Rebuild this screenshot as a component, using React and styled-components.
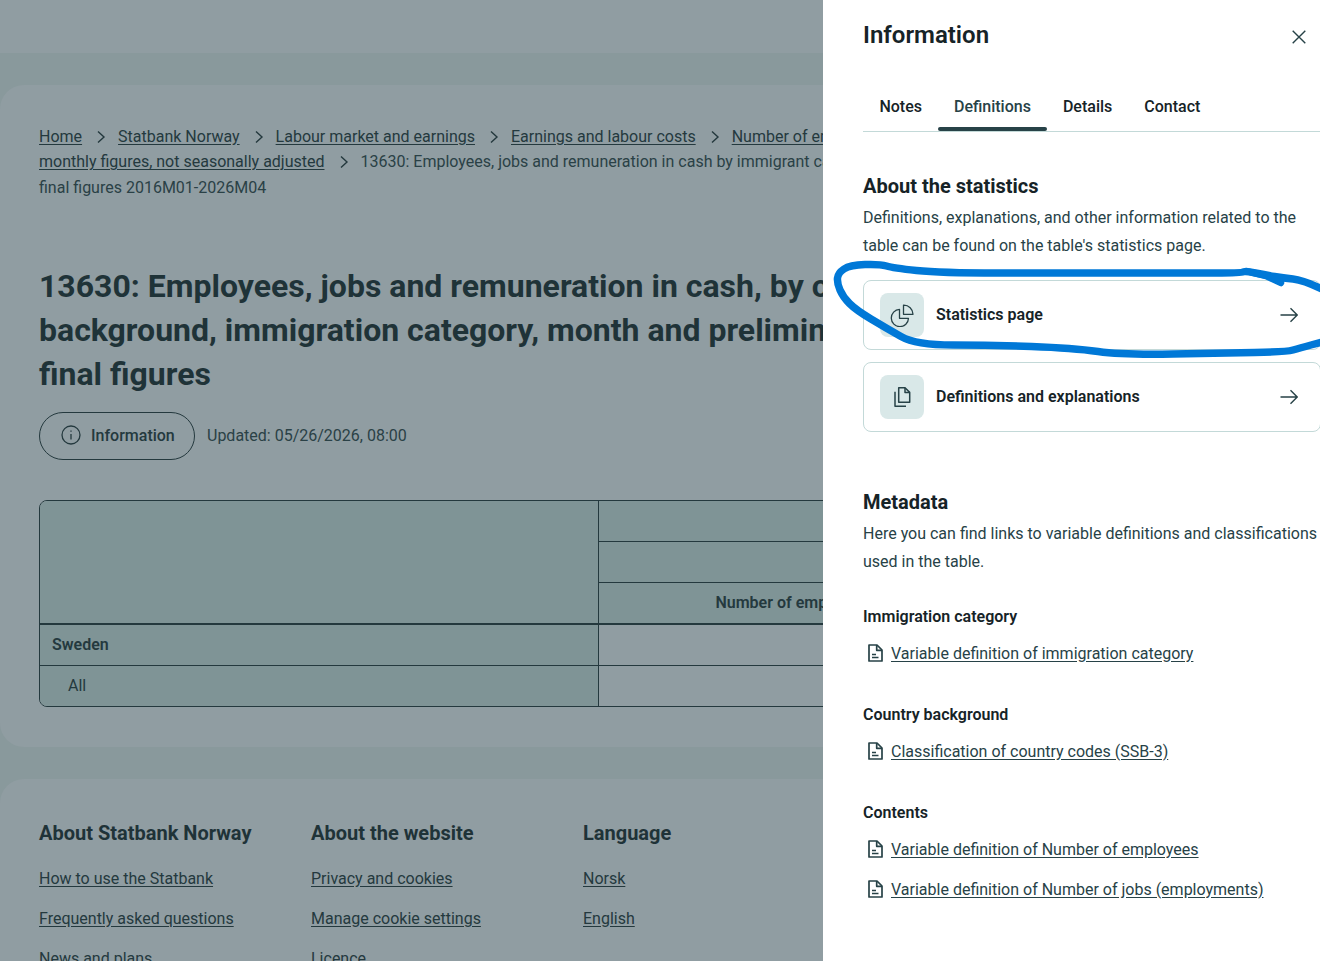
import React from 'react';
import styled, { createGlobalStyle } from 'styled-components';

const Global = createGlobalStyle`
  html, body { margin: 0; padding: 0; height: 100%; overflow: hidden; }
  body { font-family: Roboto, "Liberation Sans", sans-serif; font-size: 16px; color: #24393e; }
  * { box-sizing: border-box; }
`;

const Screen = styled.div`
  position: relative;
  width: 1320px;
  height: 961px;
  overflow: hidden;
  background: #89999c;
`;
const TopBar = styled.div`
  height: 53px;
  background: #909da2;
`;
const MainCard = styled.main`
  margin-top: 32px;
  height: 662px;
  padding: 39px 0 0 39px;
  background: #909da2;
  border-radius: 24px;
  overflow: hidden;
`;
const Crumbs = styled.nav`
  display: flex;
  flex-direction: column;
  height: 76px;
`;
const CrumbLine = styled.div`
  display: flex;
  align-items: center;
  height: 25.5px;
  white-space: nowrap;
  color: #2a4146;
`;
const CrumbLink = styled.a`
  color: #24393e;
  text-decoration: underline;
  text-underline-offset: 2px;
`;
const CrumbSep = styled.svg`
  width: 10px;
  height: 14px;
  margin: 0 12px 0 14px;
  fill: none;
  stroke: #24393e;
  stroke-width: 1.4;
`;
const Title = styled.h1`
  margin: 64px 0 0;
  font-size: 32px;
  line-height: 44px;
  font-weight: 700;
  color: #1f3338;
  white-space: nowrap;
`;
const MetaRow = styled.div`
  display: flex;
  align-items: center;
  margin-top: 16px;
  gap: 12px;
  color: #2a4146;
`;
const Updated = styled.span`
  padding-bottom: 2px;
`;
const InfoButton = styled.button`
  display: flex;
  align-items: center;
  gap: 10px;
  width: 156px;
  height: 48px;
  padding: 0 0 2px 21px;
  background: transparent;
  border: 1.5px solid #24393e;
  border-radius: 24px;
  font: 500 16px Roboto, sans-serif;
  color: #24393e;
`;
const Table = styled.table`
  margin-top: 40px;
  width: 1343px;
  table-layout: fixed;
  border-collapse: separate;
  border-spacing: 0;
  border: 1px solid #24393e;
  border-radius: 8px;
  overflow: hidden;
  font-size: 16px;
  color: #24393e;
`;
const Cell = styled.td`
  height: ${p => p.$h || 41}px;
  padding: 0 ${p => (p.$indent ? 28 : 12)}px 1px;
  background: ${p => (p.$stub ? '#7f9496' : 'transparent')};
  border-right: 1px solid #24393e;
  border-bottom: ${p => (p.$thick ? '2px' : p.$last ? '0' : '1px')} solid #24393e;
  font-weight: ${p => (p.$bold ? 600 : 400)};
  text-align: ${p => (p.$center ? 'center' : 'left')};
`;
const HeadCell = styled(Cell)`
  background: #7f9496;
`;
const Footer = styled.footer`
  display: flex;
  margin-top: 32px;
  height: 300px;
  padding: 40px 0 0 39px;
  background: #909da2;
  border-radius: 24px;
`;
const FooterCol = styled.div`
  display: flex;
  flex-direction: column;
  width: 272px;
`;
const FooterHead = styled.h2`
  margin: 0 0 18px;
  font-size: 20px;
  line-height: 28px;
  font-weight: 700;
  color: #1f3338;
`;
const FooterLink = styled.a`
  height: 40px;
  line-height: 28px;
  color: #24393e;
  text-decoration: underline;
  text-underline-offset: 2px;
`;

const Drawer = styled.aside`
  position: absolute;
  top: 0;
  right: 0;
  width: 497px;
  height: 961px;
  padding: 0 0 0 40px;
  background: #fff;
  color: #162327;
`;
const DrawerHead = styled.div`
  display: flex;
  justify-content: space-between;
  height: 81px;
  padding: 19px 14px 0 0;
`;
const DrawerTitle = styled.h2`
  margin: 0;
  font-size: 24px;
  line-height: 32px;
  font-weight: 600;
  color: #162327;
`;
const CloseBtn = styled.button`
  width: 14px;
  height: 14px;
  margin-top: 11px;
  padding: 0;
  border: 0;
  background: none;
  display: flex;
`;
const Tabs = styled.div`
  display: flex;
  height: 51px;
  border-bottom: 1px solid #c3d9d8;
`;
const Tab = styled.div`
  position: relative;
  padding: 1px 15.6px 0 16.4px;
  height: 50px;
  line-height: 50px;
  font-weight: 500;
  color: ${p => (p.$active ? '#274247' : '#162327')};
  &::after {
    content: '';
    display: ${p => (p.$active ? 'block' : 'none')};
    position: absolute;
    left: 0;
    right: 0;
    bottom: 0;
    height: 4px;
    border-radius: 2px;
    background: #274247;
  }
`;
const Section = styled.section`
  margin-top: ${p => p.$top}px;
`;
const SectionHead = styled.h3`
  margin: 0 0 4px;
  font-size: 20px;
  line-height: 28px;
  font-weight: 700;
  color: #162327;
`;
const Para = styled.p`
  margin: 0;
  width: 456px;
  line-height: 28px;
  color: #274247;
  white-space: nowrap;
`;
const Cards = styled.div`
  display: flex;
  flex-direction: column;
  gap: 12px;
  margin-top: 20px;
`;
const Card = styled.a`
  display: flex;
  align-items: center;
  width: 458px;
  height: 70px;
  padding: 0 22px 0 16px;
  border: 1px solid #c3d9d8;
  border-radius: 8px;
  font-weight: 600;
  color: #162327;
`;
const IconBox = styled.span`
  display: flex;
  align-items: center;
  justify-content: center;
  width: 44px;
  height: 44px;
  margin-right: 12px;
  border-radius: 8px;
  background: #d9e8e8;
`;
const CardLabel = styled.span`
  flex: 1;
  padding-bottom: 1px;
`;
const SubHead = styled.h4`
  margin: ${p => p.$top}px 0 0;
  font-size: 16px;
  line-height: 28px;
  font-weight: 600;
  color: #162327;
`;
const DocLink = styled.div`
  display: flex;
  align-items: center;
  height: 28px;
  margin-top: ${p => p.$top}px;
  padding-left: 4px;
  gap: 8px;
`;
const Anchor = styled.a`
  color: #274247;
  text-decoration: underline;
  text-underline-offset: 2px;
`;
const Scribble = styled.svg`
  position: absolute;
  left: 0;
  top: 0;
  width: 1320px;
  height: 961px;
  pointer-events: none;
`;

const Chevron = () => (
  <CrumbSep viewBox="0 0 10 14"><path d="M2 1.5 8 7l-6 5.5" /></CrumbSep>
);
const InfoIcon = () => (
  <svg width="20" height="20" viewBox="0 0 20 20" fill="none" stroke="#24393e" strokeWidth="1.3">
    <circle cx="10" cy="10" r="9" />
    <path d="M10 9v5.5M10 5.5v1.3" />
  </svg>
);
const Arrow = () => (
  <svg width="18" height="16" viewBox="0 0 18 16" fill="none" stroke="#274247" strokeWidth="1.4">
    <path d="M0.5 8H17M10.5 1.3 17.2 8l-6.7 6.7" />
  </svg>
);
const PieIcon = () => (
  <svg width="24" height="24" viewBox="0 0 24 24" fill="none" stroke="#274247" strokeWidth="1.3" strokeLinejoin="round">
    <path d="M9.5 6.4V15.3H18.5A8.6 8.6 0 1 1 9.5 6.4Z" />
    <path d="M13.5 2.2A9.2 9.2 0 0 1 23 11.3H13.5Z" />
  </svg>
);
const CopyIcon = () => (
  <svg width="24" height="24" viewBox="0 0 24 24" fill="none" stroke="#274247" strokeWidth="1.5" strokeLinejoin="round">
    <path d="M8.7 2.7H15L19.7 7.4V17.3H8.7Z" />
    <path d="M15 2.7V7.4H19.7" />
    <path d="M5 6.7V21.3H16" />
  </svg>
);
const DocIcon = () => (
  <svg width="16" height="18" viewBox="0 0 16 18" fill="none" stroke="#274247" strokeWidth="1.7" strokeLinejoin="round">
    <path d="M2 1H10L15 6V17H2Z" />
    <path d="M9.7 1V6.3H15" />
    <path d="M5 10.5H9M5 13.5H11.5" />
  </svg>
);

const stroke = [
  [1322, 289], [1303, 280], [1283, 278], [1266, 275], [1245, 271], [1241, 273], [1190, 273],
  [1140, 273], [1056, 273], [940, 273], [893, 268], [880, 264], [850, 265], [838, 273],
  [837, 283], [843, 297], [856, 310], [886, 328], [916, 345], [990, 345], [1073, 348],
  [1123, 355], [1223, 353], [1286, 352], [1300, 348], [1322, 342],
];
const smooth = pts => {
  let d = `M${pts[0][0]} ${pts[0][1]}`;
  for (let i = 1; i < pts.length - 1; i++) {
    const mx = (pts[i][0] + pts[i + 1][0]) / 2;
    const my = (pts[i][1] + pts[i + 1][1]) / 2;
    d += ` Q${pts[i][0]} ${pts[i][1]} ${mx} ${my}`;
  }
  const l = pts[pts.length - 1];
  return `${d} L${l[0]} ${l[1]}`;
};

export default function App() {
  return (
    <Screen>
      <Global />
      <TopBar />
      <MainCard>
        <Crumbs>
          <CrumbLine>
            <CrumbLink>Home</CrumbLink><Chevron />
            <CrumbLink>Statbank Norway</CrumbLink><Chevron />
            <CrumbLink>Labour market and earnings</CrumbLink><Chevron />
            <CrumbLink>Earnings and labour costs</CrumbLink><Chevron />
            <CrumbLink>Number of employees and jobs</CrumbLink>
          </CrumbLine>
          <CrumbLine>
            <CrumbLink>monthly figures, not seasonally adjusted</CrumbLink><Chevron />
            <span>13630: Employees, jobs and remuneration in cash by immigrant category</span>
          </CrumbLine>
          <CrumbLine>final figures 2016M01-2026M04</CrumbLine>
        </Crumbs>
        <Title>
          13630: Employees, jobs and remuneration in cash, by country<br />
          background, immigration category, month and preliminary and<br />
          final figures
        </Title>
        <MetaRow>
          <InfoButton><InfoIcon />Information</InfoButton>
          <Updated>Updated: 05/26/2026, 08:00</Updated>
        </MetaRow>
        <Table>
          <colgroup>
            <col style={{ width: 559 }} />
            <col style={{ width: 392 }} />
            <col />
          </colgroup>
          <tbody>
            <tr>
              <HeadCell rowSpan={3} $thick />
              <HeadCell colSpan={2} />
            </tr>
            <tr><HeadCell colSpan={2} /></tr>
            <tr>
              <HeadCell $center $bold $thick $h={42}>Number of employees</HeadCell>
              <HeadCell $center $bold $thick $h={42}>Number of jobs</HeadCell>
            </tr>
            <tr>
              <Cell $stub $bold>Sweden</Cell>
              <Cell />
              <Cell />
            </tr>
            <tr>
              <Cell $stub $indent $last $h={40}>All</Cell>
              <Cell $last $h={40} />
              <Cell $last $h={40} />
            </tr>
          </tbody>
        </Table>
      </MainCard>
      <Footer>
        <FooterCol>
          <FooterHead>About Statbank Norway</FooterHead>
          <FooterLink>How to use the Statbank</FooterLink>
          <FooterLink>Frequently asked questions</FooterLink>
          <FooterLink>News and plans</FooterLink>
        </FooterCol>
        <FooterCol>
          <FooterHead>About the website</FooterHead>
          <FooterLink>Privacy and cookies</FooterLink>
          <FooterLink>Manage cookie settings</FooterLink>
          <FooterLink>Licence</FooterLink>
        </FooterCol>
        <FooterCol>
          <FooterHead>Language</FooterHead>
          <FooterLink>Norsk</FooterLink>
          <FooterLink>English</FooterLink>
        </FooterCol>
      </Footer>

      <Drawer>
        <DrawerHead>
          <DrawerTitle>Information</DrawerTitle>
          <CloseBtn aria-label="Close">
            <svg width="14" height="14" viewBox="0 0 14 14" fill="none" stroke="#274247" strokeWidth="1.4">
              <path d="M0.7 0.7 13.3 13.3M13.3 0.7 0.7 13.3" />
            </svg>
          </CloseBtn>
        </DrawerHead>
        <Tabs>
          <Tab>Notes</Tab>
          <Tab $active>Definitions</Tab>
          <Tab>Details</Tab>
          <Tab>Contact</Tab>
        </Tabs>
        <Section $top={40}>
          <SectionHead>About the statistics</SectionHead>
          <Para>
            Definitions, explanations, and other information related to the<br />
            table can be found on the table's statistics page.
          </Para>
          <Cards>
            <Card>
              <IconBox><PieIcon /></IconBox>
              <CardLabel>Statistics page</CardLabel>
              <Arrow />
            </Card>
            <Card>
              <IconBox><CopyIcon /></IconBox>
              <CardLabel>Definitions and explanations</CardLabel>
              <Arrow />
            </Card>
          </Cards>
        </Section>
        <Section $top={56}>
          <SectionHead>Metadata</SectionHead>
          <Para>
            Here you can find links to variable definitions and classifications<br />
            used in the table.
          </Para>
          <SubHead $top={27}>Immigration category</SubHead>
          <DocLink $top={8}><DocIcon /><Anchor>Variable definition of immigration category</Anchor></DocLink>
          <SubHead $top={34}>Country background</SubHead>
          <DocLink $top={8}><DocIcon /><Anchor>Classification of country codes (SSB-3)</Anchor></DocLink>
          <SubHead $top={34}>Contents</SubHead>
          <DocLink $top={8}><DocIcon /><Anchor>Variable definition of Number of employees</Anchor></DocLink>
          <DocLink $top={12}><DocIcon /><Anchor>Variable definition of Number of jobs (employments)</Anchor></DocLink>
        </Section>
      </Drawer>

      <Scribble viewBox="0 0 1320 961" fill="none" stroke="#0078d7" strokeLinecap="round" strokeLinejoin="round">
        <path d={smooth(stroke)} strokeWidth="7.5" />
        <path d="M1246 271 L1266 276 L1281 283" strokeWidth="6.5" />
      </Scribble>
    </Screen>
  );
}
